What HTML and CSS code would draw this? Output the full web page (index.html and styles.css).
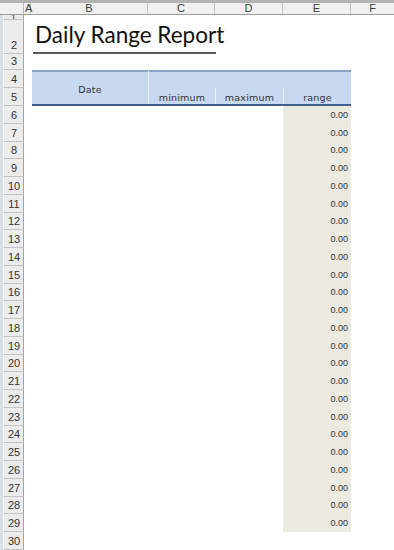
FILE: index.html
```html
<!DOCTYPE html>
<html>
<head>
<meta charset="utf-8">
<link rel="stylesheet" href="styles.css">
</head>
<body>
<div class="sheet">
  <div class="corner"></div>
  <div class="colhead">
    <div class="ch ch-a">A</div>
    <div class="ch ch-b">B</div>
    <div class="ch ch-c">C</div>
    <div class="ch ch-d">D</div>
    <div class="ch ch-e">E</div>
    <div class="ch ch-f">F</div>
  </div>
  <div class="rowhead">
    <div class="rh r1">1</div>
    <div class="rh r2">2</div>
    <div class="rh r3">3</div>
    <div class="rh r18">4</div>
    <div class="rh r18">5</div>
    <div class="rh">6</div><div class="rh">7</div><div class="rh">8</div><div class="rh">9</div><div class="rh">10</div>
    <div class="rh">11</div><div class="rh">12</div><div class="rh">13</div><div class="rh">14</div><div class="rh">15</div>
    <div class="rh">16</div><div class="rh">17</div><div class="rh">18</div><div class="rh">19</div><div class="rh">20</div>
    <div class="rh">21</div><div class="rh">22</div><div class="rh">23</div><div class="rh">24</div><div class="rh">25</div>
    <div class="rh">26</div><div class="rh">27</div><div class="rh">28</div><div class="rh">29</div><div class="rh">30</div>
  </div>
  <div class="grid">
    <div class="title-cell">
      <div class="title">Daily Range Report</div>
      <div class="title-line"></div>
    </div>
    <div class="thead">
      <div class="th th-date">Date</div>
      <div class="th th-min">minimum</div>
      <div class="th th-max">maximum</div>
      <div class="th th-range">range</div>
    </div>
    <div class="range-col">
      <div class="val">0.00</div><div class="val">0.00</div><div class="val">0.00</div><div class="val">0.00</div>
      <div class="val">0.00</div><div class="val">0.00</div><div class="val">0.00</div><div class="val">0.00</div>
      <div class="val">0.00</div><div class="val">0.00</div><div class="val">0.00</div><div class="val">0.00</div>
      <div class="val">0.00</div><div class="val">0.00</div><div class="val">0.00</div><div class="val">0.00</div>
      <div class="val">0.00</div><div class="val">0.00</div><div class="val">0.00</div><div class="val">0.00</div>
      <div class="val">0.00</div><div class="val">0.00</div><div class="val">0.00</div><div class="val">0.00</div>
    </div>
  </div>
</div>
</body>
</html>
```

FILE: styles.css
```css
html, body {
  margin: 0;
  padding: 0;
  background: #ffffff;
  overflow: hidden;
}

.sheet {
  width: 394px;
  height: 550px;
  display: grid;
  grid-template-columns: 24px 370px;
  grid-template-rows: 15px 535px;
  overflow: hidden;
  font-family: "Liberation Sans", Arial, sans-serif;
}

.corner {
  border-top: 3px solid #b3b3b3;
  background: #f0f0f0;
  border-bottom: 1px solid #9c9c9c;
  border-right: 1px solid #b8b8b8;
  box-sizing: border-box;
}

.colhead {
  display: flex;
  border-top: 3px solid #b3b3b3;
  background: #f0f0f0;
  border-bottom: 1px solid #9c9c9c;
  box-sizing: border-box;
}

.ch {
  box-sizing: border-box;
  border-right: 1px solid #c2c2c2;
  font-size: 11px;
  line-height: 11px;
  color: #3c3c3c;
  text-align: center;
}
.ch-a { width: 7px; text-align: left; padding-left: 1px; }
.ch-b { width: 117px; }
.ch-c { width: 67px; }
.ch-d { width: 68px; }
.ch-e { width: 68px; }
.ch-f { width: 43px; border-right: none; }

.rowhead {
  display: flex;
  flex-direction: column;
  border-left: 3px solid #d9e0e8;
  box-shadow: inset 1px 0 0 #a9b8ca;
  overflow: hidden;
}

.rh {
  box-sizing: border-box;
  height: 17.75px;
  flex: none;
  display: flex;
  align-items: flex-end;
  justify-content: center;
  padding-bottom: 2px;
  padding-left: 1px;
  background: #ececec;
  border-bottom: 1px solid #c3c3c3;
  border-right: 1px solid #a4a4a4;
  border-left: 1px solid #f8f8f8;
  font-size: 11px;
  line-height: 12px;
  color: #333333;
}
.r1 { height: 5px; padding: 0; overflow: hidden; line-height: 4px; align-items: flex-start; font-size: 9px; }
.r2 { height: 33.5px; }
.r3 { height: 16.5px; }
.r18 { height: 18px; }

.grid {
  display: grid;
  grid-template-columns: 7px 117px 67px 68px 68px 43px;
  grid-template-rows: 5px 33.5px 16.5px 18px 18px repeat(25, 17.75px);
}

.title-cell {
  grid-column: 2 / 5;
  grid-row: 2;
  display: flex;
  flex-direction: column;
  justify-content: flex-end;
  padding-left: 2px;
}

.title {
  font-family: "Lato", "Open Sans", sans-serif;
  font-size: 22.5px;
  line-height: 26px;
  color: #111111;
  padding-left: 2px;
  white-space: nowrap;
  margin-bottom: 4px;
}

.title-line {
  width: 183px;
  height: 2px;
  background: #5a5a5a;
  margin-bottom: 0px;
}

.thead {
  grid-column: 2 / 6;
  grid-row: 4 / 6;
  margin-left: 1px;
  display: grid;
  grid-template-columns: 116px 67px 68px 68px;
  grid-template-rows: 1fr 1fr;
  background: #c6d9f1;
  border-top: 2px solid #8ba5c6;
  border-bottom: 2px solid #3f5f8f;
  box-sizing: border-box;
}

.th {
  font-family: "DejaVu Sans", Verdana, sans-serif;
  font-size: 9.5px;
  letter-spacing: 0.2px;
  color: #333333;
  display: flex;
  justify-content: center;
  align-items: flex-end;
  padding-bottom: 1px;
}
.th-date {
  grid-column: 1;
  grid-row: 1 / 3;
  align-items: center;
  padding-bottom: 0;
  padding-top: 2px;
}
.th-min {
  grid-column: 2;
  grid-row: 2;
  border-left: 1px solid #eef3fa;
  margin-top: -17px;
  padding-top: 17px;
}
.th-max {
  grid-column: 3;
  grid-row: 2;
  border-left: 1px solid #eef3fa;
}
.th-range {
  grid-column: 4;
  grid-row: 2;
  border-left: 1px solid #eef3fa;
}

.range-col {
  grid-column: 5;
  grid-row: 6 / 30;
  background: #ecebe1;
  display: flex;
  flex-direction: column;
}

.val {
  height: 17.75px;
  flex: none;
  display: flex;
  align-items: center;
  justify-content: flex-end;
  padding-right: 3px;
  font-size: 9px;
  color: #333333;
}
```
